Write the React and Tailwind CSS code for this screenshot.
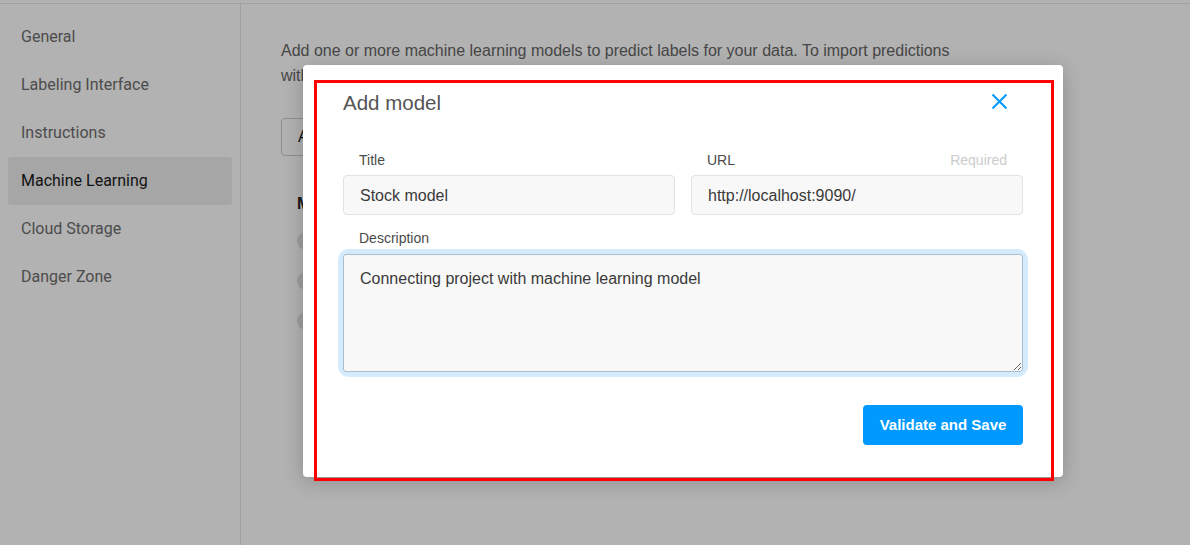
import { useState } from "react";

const menu = ["General", "Labeling Interface", "Instructions", "Machine Learning", "Cloud Storage", "Danger Zone"];

const Field = ({ label, hint, value }) => (
  <div className="flex flex-col flex-1">
    <div className="flex justify-between px-4 h-[16px] items-center text-[14px]">
      <span className="text-[#4a4a4a]">{label}</span>
      {hint && <span className="text-[#cccccc]">{hint}</span>}
    </div>
    <div className="mt-[7px] h-[40px] flex items-center px-4 pt-[2px] bg-[#f8f8f8] border border-[#e2e2e2] rounded-[4px] text-[16px] text-[#3a3a3a]">
      {value}
    </div>
  </div>
);

export default function App() {
  const [desc, setDesc] = useState("Connecting project with machine learning model");

  return (
    <div className="relative w-[1190px] h-[545px] overflow-hidden bg-white" style={{ fontFamily: "Roboto, sans-serif" }}>
      {/* page behind the modal */}
      <div className="h-[4px] border-b border-[#e6e6e6]" />
      <div className="flex h-[541px]">
        <aside className="w-[241px] shrink-0 border-r border-[#e6e6e6] px-2 pt-[9px]">
          {menu.map((m) => (
            <div
              key={m}
              className={`h-[48px] flex items-center px-[13px] rounded-[3px] text-[16px] ${m === "Machine Learning" ? "bg-[#eeeeee] text-[#1a1a1a]" : "text-[#6e6e6e]"}`}
            >
              {m}
            </div>
          ))}
        </aside>
        <main className="flex-1 pl-10 pt-[34px] text-[#666]" style={{ fontFamily: "'Liberation Sans', sans-serif" }}>
          <p className="text-[16px] leading-[25px] w-[700px]">
            Add one or more machine learning models to predict labels for your data. To import predictions with
          </p>
          <div className="mt-[30px] w-[120px] h-[38px] border border-[#ccc] rounded-[4px] flex items-center px-4 text-[16px] font-medium text-[#111]">
            Add
          </div>
          <div className="mt-[36px] pl-4 text-[16px] font-bold text-[#222]">M</div>
          <div className="pl-4 mt-[16px] flex flex-col gap-[22px]">
            <div className="w-[18px] h-[18px] rounded-full bg-[#e4e4e4]" />
            <div className="w-[18px] h-[18px] rounded-full bg-[#e4e4e4]" />
            <div className="w-[18px] h-[18px] rounded-full bg-[#e4e4e4]" />
          </div>
        </main>
      </div>

      {/* dim overlay */}
      <div className="absolute inset-0 bg-black/30" />

      {/* modal */}
      <div
        className="absolute left-[303px] top-[65px] w-[760px] h-[412px] bg-white rounded-[4px] shadow-[0_4px_20px_rgba(0,0,0,0.22)] px-10"
        style={{ fontFamily: "'Liberation Sans', sans-serif" }}
      >
        <div className="h-[76px] flex items-center justify-between pt-[1px]">
          <h2 className="text-[20.5px] text-[#555] font-normal">Add model</h2>
          <svg width="17" height="17" viewBox="0 0 17 17" className="mr-[15px] -mt-[4px]">
            <path d="M1.5 1.5 L15.5 15.5 M15.5 1.5 L1.5 15.5" stroke="#0099ff" strokeWidth="2" />
          </svg>
        </div>
        <div className="flex gap-4 mt-[11px]">
          <Field label="Title" value="Stock model" />
          <Field label="URL" hint="Required" value="http://localhost:9090/" />
        </div>
        <div className="mt-[15px] px-4 h-[16px] flex items-center text-[14px] text-[#4a4a4a]">Description</div>
        <div className="mt-[8px] rounded-[6px] ring-[5px] ring-[#d3ebfc]">
          <textarea
            value={desc}
            onChange={(e) => setDesc(e.target.value)}
            className="block w-full h-[118px] bg-[#f8f8f8] border border-[#a9bfcf] rounded-[3px] px-4 py-[12px] text-[16px] text-[#3a3a3a] outline-none"
            style={{ fontFamily: "'Liberation Sans', sans-serif" }}
          />
        </div>
        <div className="flex justify-end mt-[33px]">
          <button className="w-[160px] h-[40px] bg-[#0099ff] rounded-[4px] text-white text-[15px] font-bold">
            Validate and Save
          </button>
        </div>
      </div>

      {/* annotation frame */}
      <div className="absolute left-[314px] top-[80px] w-[740px] h-[401px] border-[3px] border-[#ff0000] pointer-events-none" />
    </div>
  );
}
